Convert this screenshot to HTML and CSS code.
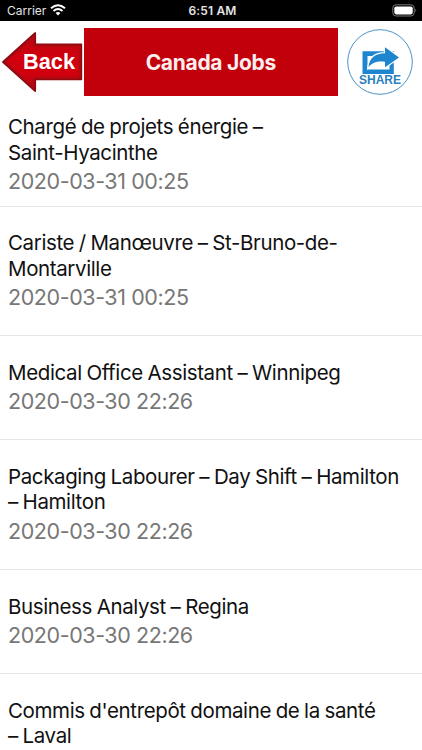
FILE: index.html
```
<!DOCTYPE html>
<html lang="en">
<head>
    <meta charset="UTF-8">
    <meta name="viewport" content="width=device-width, initial-scale=1.0">
    <title>Canada Jobs</title>
    <link rel="stylesheet" href="styles.css">
</head>
<body>

<!-- Status Bar -->
<div class="status-bar">
    <div class="carrier">
        <span>Carrier</span>
        <svg class="wifi" viewBox="0 0 16 12">
            <path d="M1 4.3 Q8 -1.9 15 4.3" fill="none" stroke="#fff" stroke-width="2"/>
            <path d="M3.5 7 Q8 3.2 12.5 7" fill="none" stroke="#fff" stroke-width="1.9"/>
            <path d="M5.6 9 Q8 7.1 10.4 9 L8 11.5 Z" fill="#fff"/>
        </svg>
    </div>
    <span class="time">6:51 AM</span>
    <div class="battery">
        <svg viewBox="0 0 26 13">
            <rect x="0.8" y="0.8" width="21.4" height="11.2" rx="3.2" fill="none" stroke="#777" stroke-width="1"/>
            <rect x="2.3" y="2.4" width="18.4" height="8" rx="1.8" fill="#fff"/>
            <path d="M23.4 4.6 Q25.2 6.4 23.4 8.2 Z" fill="#777"/>
        </svg>
    </div>
</div>

<header>
    <a class="back" href="#">
        <svg viewBox="0 0 84 68">
            <defs>
                <linearGradient id="backFill" x1="0" y1="0" x2="0" y2="1">
                    <stop offset="0" stop-color="#b80812"/>
                    <stop offset="0.4" stop-color="#d0000e"/>
                    <stop offset="0.7" stop-color="#d0000e"/>
                    <stop offset="1" stop-color="#b00711"/>
                </linearGradient>
            </defs>
            <path d="M3 34 L35.2 5 V16.3 H81.3 V51.3 H35.2 V63 Z" fill="url(#backFill)" stroke="#8f0a10" stroke-width="1.8" stroke-linejoin="round"/>
            <path d="M5.6 34 L33.6 8.6 V18 H79.6 V49.7 H33.6 V59.4 Z" fill="none" stroke="#ad0a12" stroke-width="1.4"/>
            <text class="back-text" x="23" y="41" textLength="52" lengthAdjust="spacingAndGlyphs">Back</text>
        </svg>
    </a>
    <h1>Canada Jobs</h1>
    <a class="share" href="#">
        <svg viewBox="0 0 66 66">
            <circle cx="33" cy="33" r="32.3" fill="#fff" stroke="#4b93c3" stroke-width="1"/>
            <path d="M15.5 22.3 H46.8 V45 H15.5 Z M20.5 27 V40.5 H42.5 V27 Z" fill="#1e86cf" fill-rule="evenodd"/>
            <path d="M21.5 38 C22.5 29 28 24.2 38 24.2 V18.3 L52 28.4 L38 38.2 V32.8 C30 32 26 33.5 21.5 38 Z" fill="#1e86cf" stroke="#fff" stroke-width="2.4" paint-order="stroke"/>
            <text class="share-text" x="12" y="55" textLength="42" lengthAdjust="spacingAndGlyphs">SHARE</text>
        </svg>
    </a>
</header>

<!-- Job List -->
<ul class="jobs">
    <li>
        <h2>Chargé de projets énergie –<br>Saint-Hyacinthe</h2>
        <p class="date">2020-03-31 00:25</p>
    </li>
    <li>
        <h2>Cariste / Manœuvre – St-Bruno-de-<br>Montarville</h2>
        <p class="date">2020-03-31 00:25</p>
    </li>
    <li>
        <h2>Medical Office Assistant – Winnipeg</h2>
        <p class="date">2020-03-30 22:26</p>
    </li>
    <li>
        <h2>Packaging Labourer – Day Shift – Hamilton<br>– Hamilton</h2>
        <p class="date">2020-03-30 22:26</p>
    </li>
    <li>
        <h2>Business Analyst – Regina</h2>
        <p class="date">2020-03-30 22:26</p>
    </li>
    <li>
        <h2>Commis d'entrepôt domaine de la santé<br>– Laval</h2>
    </li>
</ul>

</body>
</html>
```
FILE: styles.css
```
/* General Styles */
body {
    font-family: Inter, Roboto, sans-serif;
    margin: 0;
    height: 750px;
    overflow: hidden;
    background-color: #fff;
    color: #111;
}

/* Status bar */
.status-bar {
    display: grid;
    grid-template-columns: 1fr auto 1fr;
    align-items: center;
    height: 20.5px;
    padding: 0 4px 0 7px;
    background-color: #000;
    color: #e4e4e4;
    font-size: 12px;
}
.carrier {
    display: flex;
    align-items: center;
    gap: 4px;
}
.wifi {
    width: 16px;
    height: 12px;
}
.time {
    font-weight: 600;
    letter-spacing: 0.15px;
}
.battery {
    display: flex;
    justify-content: flex-end;
}
.battery svg {
    width: 26px;
    height: 13px;
}

/* Header */
header {
    display: flex;
    align-items: center;
    height: 68px;
    padding-top: 7px;
}
.back svg {
    display: block;
    width: 84px;
    height: 68px;
}
.back-text {
    font-family: "Liberation Sans", Arial, sans-serif;
    font-size: 22.5px;
    font-weight: bold;
    fill: #fff;
}
h1 {
    width: 253.5px;
    height: 68px;
    margin: 0;
    background-color: #c1000c;
    color: #fdeeee;
    font-size: 21px;
    font-weight: 700;
    line-height: 69px;
    letter-spacing: -0.3px;
    text-align: center;
}
.share {
    margin-left: 9px;
}
.share svg {
    display: block;
    width: 66px;
    height: 66px;
}
.share-text {
    font-family: "Liberation Sans", Arial, sans-serif;
    font-size: 12.5px;
    font-weight: bold;
    fill: #2b7fc0;
}

/* Job list */
.jobs {
    list-style: none;
    margin: 0;
    padding: 0;
}
.jobs li {
    padding: 23.5px 8px 25.2px;
    border-bottom: 1px solid #e6e6e6;
}
.jobs li:first-child {
    padding-top: 18.5px;
    padding-bottom: 11.5px;
}
h2 {
    margin: 0;
    font-size: 20.5px;
    font-weight: 400;
    line-height: 25.5px;
    letter-spacing: -0.38px;
    word-spacing: -0.7px;
    white-space: nowrap;
}
.date {
    margin: 3px 0 0;
    color: #777;
    font-size: 21.5px;
    line-height: 26px;
    letter-spacing: -0.42px;
}
```
